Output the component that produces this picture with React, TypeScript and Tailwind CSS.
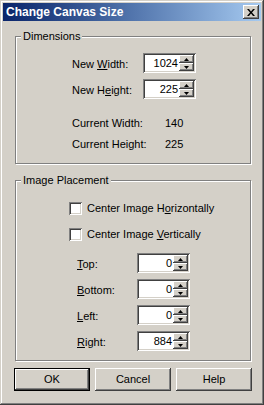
import type { ReactNode } from "react"

const raised =
  "shadow-[inset_-1px_-1px_0_#404040,inset_1px_1px_0_#fff,inset_-2px_-2px_0_#808080,inset_2px_2px_0_#d4d0c8]"
const sunken =
  "shadow-[inset_1px_1px_0_#808080,inset_-1px_-1px_0_#fff,inset_2px_2px_0_#404040,inset_-2px_-2px_0_#d4d0c8]"

function Arrow({ up }: { up?: boolean }) {
  return (
    <svg width="5" height="3" viewBox="0 0 5 3" className="block">
      {up ? <path d="M2.5 0 L5 3 L0 3 Z" fill="#000" /> : <path d="M0 0 L5 0 L2.5 3 Z" fill="#000" />}
    </svg>
  )
}

function SpinBox({ value }: { value: string }) {
  return (
    <div className={`w-[53px] h-5 bg-white p-[2px] flex ${sunken}`}>
      <div className="flex-1 text-right pr-[1px] leading-[16px]">{value}</div>
      <div className="w-[15px] flex flex-col">
        <div className={`h-[8px] bg-[#d4d0c8] flex items-center justify-center ${raised}`}>
          <Arrow up />
        </div>
        <div className={`h-[8px] bg-[#d4d0c8] flex items-center justify-center ${raised}`}>
          <Arrow />
        </div>
      </div>
    </div>
  )
}

function Group({ title, className, children }: { title: string; className: string; children: ReactNode }) {
  return (
    <div
      className={`relative ml-[1px] w-[236px] border border-[#808080] shadow-[1px_1px_0_#fff,inset_1px_1px_0_#fff] ${className}`}
    >
      <span className="absolute top-[-7px] left-[5px] px-[2px] bg-[#d4d0c8] leading-[13px]">{title}</span>
      {children}
    </div>
  )
}

function Check({ children }: { children: ReactNode }) {
  return (
    <div className="flex items-center h-[13px] gap-[5px]">
      <div className={`w-[13px] h-[13px] bg-white ${sunken}`} />
      <span className="leading-[13px]">{children}</span>
    </div>
  )
}

function Button({ label, primary }: { label: string; primary?: boolean }) {
  return (
    <div className={`w-[76px] h-[23px] ${primary ? "border border-black" : ""}`}>
      <div className={`w-full h-full flex items-center justify-center leading-[13px] ${raised}`}>{label}</div>
    </div>
  )
}

export default function App() {
  return (
    <div
      className="w-[264px] h-[405px] bg-[#d4d0c8] p-[3px] flex flex-col text-[11px] text-black font-['Liberation_Sans',Arial,sans-serif] shadow-[inset_-1px_-1px_0_#404040,inset_1px_1px_0_#d4d0c8,inset_-2px_-2px_0_#808080,inset_2px_2px_0_#fff]"
    >
      <div className="h-[18px] flex items-center justify-between pl-[3px] pr-[2px] bg-linear-to-r from-[#0a246a] to-[#a6caf0]">
        <span className="text-white font-bold text-[12px] leading-none">Change Canvas Size</span>
        <div className={`w-[16px] h-[14px] bg-[#d4d0c8] flex items-center justify-center ${raised}`}>
          <svg width="8" height="7" viewBox="0 0 8 7" className="block">
            <path d="M0 0h2l2 2.5L6 0h2L5 3.5 8 7H6L4 4.5 2 7H0l3-3.5z" fill="#000" />
          </svg>
        </div>
      </div>

      <div className="flex-1 pl-[11px] pt-[15px] flex flex-col">
        <Group title="Dimensions" className="h-[128px] pt-[16px] pl-[56px]">
          <div className="flex flex-col gap-[6px]">
            <div className="flex items-center h-5">
              <span className="w-[71px] pt-[2px]">
                New <u>W</u>idth:
              </span>
              <SpinBox value="1024" />
            </div>
            <div className="flex items-center h-5">
              <span className="w-[71px] pt-[2px]">
                New H<u>e</u>ight:
              </span>
              <SpinBox value="225" />
            </div>
          </div>
          <div className="mt-[18px] flex flex-col gap-[8px] leading-[13px]">
            <div className="flex">
              <span className="w-[93px]">Current Width:</span>
              <span>140</span>
            </div>
            <div className="flex">
              <span className="w-[93px]">Current Height:</span>
              <span>225</span>
            </div>
          </div>
        </Group>

        <Group title="Image Placement" className="mt-[16px] h-[181px] pt-[21px] pl-[53px]">
          <div className="flex flex-col gap-[13px]">
            <Check>
              Center Image H<u>o</u>rizontally
            </Check>
            <Check>
              Center Image <u>V</u>ertically
            </Check>
          </div>
          <div className="mt-[12px] ml-[8px] flex flex-col gap-[6px]">
            {[
              ["T", "op:", "0"],
              ["B", "ottom:", "0"],
              ["L", "eft:", "0"],
              ["R", "ight:", "884"],
            ].map(([k, rest, v]) => (
              <div key={k} className="flex items-center h-5">
                <span className="w-[60px] pt-[2px]">
                  <u>{k}</u>
                  {rest}
                </span>
                <SpinBox value={v} />
              </div>
            ))}
          </div>
        </Group>

        <div className="mt-[7px] flex gap-[5px]">
          <Button label="OK" primary />
          <Button label="Cancel" />
          <Button label="Help" />
        </div>
      </div>
    </div>
  )
}
